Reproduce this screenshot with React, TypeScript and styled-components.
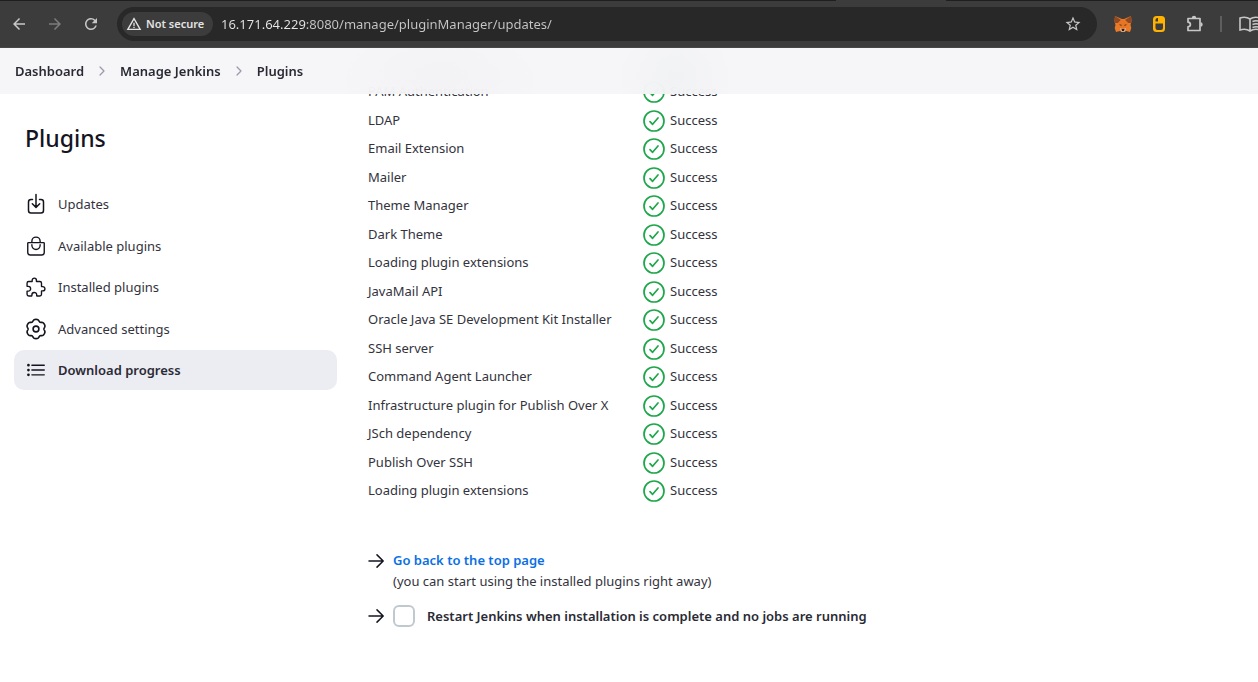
import React from "react";
import styled, { createGlobalStyle } from "styled-components";
import {
  IoBagHandleOutline,
  IoChevronForward,
  IoExtensionPuzzleOutline,
  IoListOutline,
} from "react-icons/io5";
import { MdArrowBack, MdArrowForward, MdRefresh, MdStarBorder, MdWarningAmber } from "react-icons/md";

const GlobalStyle = createGlobalStyle`
  *, *::before, *::after { box-sizing: border-box; }
  body {
    margin: 0;
    background: #fff;
    color: #14141f;
    font: 13px/20px "Noto Sans", "Open Sans", sans-serif;
    overflow: hidden;
  }
  button, input { font: inherit; }
`;

const TabStrip = styled.div`
  display: flex;
  justify-content: flex-end;
  height: 1px;
  padding-right: 312px;
  background: #1f1f1f;
`;

const ActiveTab = styled.div`
  width: 110px;
  background: #3c3c3c;
`;

const Toolbar = styled.div`
  display: flex;
  align-items: center;
  height: 47px;
  margin-right: -10px;
  padding-left: 1px;
  background: #3c3c3c;
  border-bottom: 1px solid #474747;
`;

const ToolButton = styled.button<{ $dim?: boolean }>`
  display: flex;
  flex: none;
  align-items: center;
  justify-content: center;
  width: 36px;
  height: 36px;
  padding: 0;
  border: 0;
  border-radius: 50%;
  background: transparent;
  color: ${(p) => (p.$dim ? "#7c7c7c" : "#c7c7c7")};
`;

const AddressBar = styled.div`
  display: flex;
  flex: 1;
  align-items: center;
  height: 34px;
  margin: 0 8px;
  padding: 0 6px 0 5px;
  border-radius: 17px;
  background: #282828;
`;

const SecurityChip = styled.button`
  display: flex;
  flex: none;
  align-items: center;
  gap: 4px;
  width: 91px;
  height: 24px;
  padding: 0 0 0 4px;
  border: 0;
  border-radius: 12px;
  background: #3c3c3c;
  color: #e3e3e3;
  font-size: 11px;
  font-weight: 600;
  white-space: nowrap;
`;

const AddressInput = styled.input`
  flex: 1;
  min-width: 0;
  margin-left: 8px;
  padding: 0;
  border: 0;
  outline: 0;
  background: linear-gradient(90deg, #e8e8e8 85px, #c7c7c7 85px);
  background-clip: text;
  color: transparent;
`;

const Divider = styled.span`
  flex: none;
  width: 2px;
  height: 16px;
  margin: 0 10px 0 7px;
  background: #5e5e5e;
`;

const Header = styled.header`
  position: relative;
  z-index: 1;
  display: flex;
  align-items: center;
  height: 46px;
  padding-left: 15px;
  background:
    radial-gradient(ellipse 110px 60px at 440px 30px, rgba(20, 20, 31, 0.015), transparent),
    radial-gradient(ellipse 60px 60px at 675px 30px, rgba(20, 60, 50, 0.025), transparent),
    rgba(245, 245, 248, 0.94);
  backdrop-filter: blur(15px);
`;

const Crumbs = styled.ol`
  display: flex;
  align-items: center;
  gap: 11px;
  margin: 0;
  padding: 0;
  list-style: none;
`;

const Crumb = styled.li`
  display: flex;
  align-items: center;
  gap: 11px;
  font-weight: 600;

  a {
    color: #2a2a35;
    text-decoration: none;
  }

  svg {
    color: #9b9bac;
  }
`;

const Page = styled.div`
  display: flex;
  align-items: flex-start;
`;

const Sidebar = styled.aside`
  flex: 0 0 337px;
  padding: 26px 0 0 14px;
`;

const Title = styled.h1`
  margin: 0;
  padding-left: 11px;
  font-size: 23px;
  line-height: 36px;
  font-weight: 500;
`;

const TaskList = styled.nav`
  display: flex;
  flex-direction: column;
  justify-content: space-between;
  height: 206px;
  margin-top: 28px;
`;

const Task = styled.a<{ $active?: boolean }>`
  display: flex;
  align-items: center;
  gap: 11px;
  height: 40px;
  padding-left: 11px;
  border-radius: 10px;
  background: ${(p) => (p.$active ? "#ecedf3" : "transparent")};
  color: ${(p) => (p.$active ? "#2a2a35" : "#33333d")};
  font-weight: ${(p) => (p.$active ? 600 : 400)};
  text-decoration: none;

  svg {
    color: #14141f;
  }
`;

const Main = styled.main`
  flex: 1;
  min-width: 0;
  margin-top: -17px;
  padding-left: 31px;
`;

const JobTable = styled.table`
  border-collapse: collapse;
  color: #33333d;

  td {
    height: 28px;
    padding: 0;
    white-space: nowrap;
  }

  tr:nth-child(even) td {
    height: 29px;
  }

  td:first-child {
    width: 275px;
  }
`;

const Status = styled.span`
  display: flex;
  align-items: center;
  gap: 5px;

  svg {
    margin-top: 2px;
  }
`;

const Actions = styled.div`
  display: flex;
  flex-direction: column;
  gap: 13px;
  margin-top: 46px;
`;

const Action = styled.div`
  display: flex;
  align-items: flex-start;
  gap: 7px;
`;

const ActionText = styled.div`
  color: #33333d;
  line-height: 21px;

  a {
    display: block;
    color: #0b6fe4;
    font-weight: 600;
    text-decoration: none;
  }
`;

const RestartLabel = styled.label`
  display: flex;
  align-items: center;
  gap: 12px;
  height: 22px;
  color: #2a2a35;
  font-weight: 600;
`;

const CheckBox = styled.input`
  appearance: none;
  width: 22px;
  height: 22px;
  margin: 0;
  border: 2px solid #c0c9ce;
  border-radius: 6px;
  background: #fff;
`;

const Fox = () => (
  <svg width="18" height="18" viewBox="0 0 18 18" aria-hidden="true">
    <path d="M1 1l7 3h2l7-3 .5 5-1 4 .8 3-1.3 4-4-1-2 1H8l-2-1-4 1L.7 13l.8-3-1-4z" fill="#e87a28" />
    <path d="M1 1l6 4-3 3-3.500 0zM17 1l-6 4 3 3 3.500 0z" fill="#8f4a24" />
    <path d="M4 8l3-3h4l3 3-2 5H6z" fill="#e87524" />
    <path d="M5 9l3 1-1 1zM13 9l-3 1 1 1z" fill="#5a3520" />
    <path d="M6 13l2 1h2l2-1-1 3.500H7z" fill="#d5c1ae" />
    <path d="M7.500 14h3l-.5 2H8z" fill="#241b16" />
  </svg>
);

const Mouse = () => (
  <svg width="18" height="18" viewBox="0 0 18 18" aria-hidden="true">
    <rect x="3" y="1" width="12" height="16" rx="3.500" fill="#ffb300" />
    <path d="M5.500 6.500V5a2 2 0 0 1 2-2H8v3.500zM5.500 8.500h7.500V13a2 2 0 0 1-2 2H7.500a2 2 0 0 1-2-2z" fill="#3c3c3c" />
  </svg>
);

const Extension = () => (
  <svg width="20" height="20" viewBox="0 0 20 20" aria-hidden="true">
    <path
      d="M3 4.500h12v12H3v-3.700c3.200-.3 3.200-4.300 0-4.600z"
      fill="none"
      stroke="#c7c7c7"
      strokeWidth="1.700"
      strokeLinejoin="round"
    />
    <path d="M6.800 4a2.200 2.200 0 0 1 4.400 0zM15.500 8.300a2.200 2.200 0 0 1 0 4.400z" fill="#c7c7c7" />
  </svg>
);

const Book = () => (
  <svg width="22" height="18" viewBox="0 0 22 18" fill="none" stroke="#c7c7c7" strokeWidth="1.600" aria-hidden="true">
    <path d="M11 4C8 2 4 2 1 3v12c3-1 7-1 10 1 3-2 7-2 10-1V3c-3-1-7-1-10 1zv12M13.500 6.500c2-.8 4-.8 5.500-.5M13.500 9.500c2-.8 4-.8 5.500-.5M13.500 12.500c2-.8 4-.8 5.500-.5" />
  </svg>
);

const strokeProps = {
  fill: "none",
  stroke: "currentColor",
  strokeLinecap: "round",
  strokeLinejoin: "round",
  "aria-hidden": true,
} as const;

const Download = () => (
  <svg width="22" height="22" viewBox="0 0 22 22" strokeWidth="1.500" {...strokeProps}>
    <path d="M7.500 6.500H6A2.500 2.500 0 0 0 3.500 9v8.500A2.500 2.500 0 0 0 6 20h10a2.500 2.500 0 0 0 2.500-2.500V9A2.500 2.500 0 0 0 16 6.500h-1.500M11 1.500V14M7.300 10.800L11 14.400l3.700-3.600" />
  </svg>
);

/* Six-lobed rosette with narrow notches between the lobes. */
const gearOutline =
  Array.from({ length: 97 }, (_, i) => {
    const angle = (i / 96) * Math.PI * 2;
    const radius = 9.6 - 1.7 * Math.pow(Math.abs(Math.cos(angle * 3)), 4);
    const x = 11 + radius * Math.cos(angle);
    const y = 11 + radius * Math.sin(angle);
    return `${i ? "L" : "M"}${x.toFixed(2)} ${y.toFixed(2)}`;
  }).join("") + "z";

const Gear = () => (
  <svg width="22" height="22" viewBox="0 0 22 22" strokeWidth="1.600" {...strokeProps}>
    <path d={gearOutline} />
    <circle cx="11" cy="11" r="2.900" />
  </svg>
);

const Success = () => (
  <svg width="22" height="22" viewBox="0 0 22 22" strokeWidth="1.700" color="#1ea64b" {...strokeProps}>
    <circle cx="11" cy="11" r="10" />
    <path d="M7 11.700l2.600 2.600L15 8" />
  </svg>
);

const Arrow = () => (
  <svg width="18" height="22" viewBox="0 0 18 22" strokeWidth="1.500" {...strokeProps}>
    <path d="M1 11H15M9 4.900L15.200 11l-6.200 6.100" />
  </svg>
);

const tasks = [
  { label: "Updates", icon: <Download /> },
  { label: "Available plugins", icon: <IoBagHandleOutline size={22} /> },
  { label: "Installed plugins", icon: <IoExtensionPuzzleOutline size={22} /> },
  { label: "Advanced settings", icon: <Gear /> },
  { label: "Download progress", icon: <IoListOutline size={22} />, active: true },
];

const jobs = [
  "PAM Authentication",
  "LDAP",
  "Email Extension",
  "Mailer",
  "Theme Manager",
  "Dark Theme",
  "Loading plugin extensions",
  "JavaMail API",
  "Oracle Java SE Development Kit Installer",
  "SSH server",
  "Command Agent Launcher",
  "Infrastructure plugin for Publish Over X",
  "JSch dependency",
  "Publish Over SSH",
  "Loading plugin extensions",
];

export default function App() {
  return (
    <>
      <GlobalStyle />
      <TabStrip>
        <ActiveTab />
      </TabStrip>
      <Toolbar>
        <ToolButton aria-label="Back"><MdArrowBack size={18} /></ToolButton>
        <ToolButton aria-label="Forward" $dim><MdArrowForward size={18} /></ToolButton>
        <ToolButton aria-label="Reload"><MdRefresh size={18} /></ToolButton>
        <AddressBar>
          <SecurityChip><MdWarningAmber size={16} />Not secure</SecurityChip>
          <AddressInput aria-label="Address" defaultValue="16.171.64.229:8080/manage/pluginManager/updates/" />
          <ToolButton aria-label="Bookmark"><MdStarBorder size={18} /></ToolButton>
        </AddressBar>
        <ToolButton aria-label="Wallet"><Fox /></ToolButton>
        <ToolButton aria-label="Mouse tool"><Mouse /></ToolButton>
        <ToolButton aria-label="Extensions"><Extension /></ToolButton>
        <Divider />
        <ToolButton aria-label="Reading list"><Book /></ToolButton>
      </Toolbar>
      <Header>
        <Crumbs>
          <Crumb><a href="#dashboard">Dashboard</a><IoChevronForward size={14} /></Crumb>
          <Crumb><a href="#manage">Manage Jenkins</a><IoChevronForward size={14} /></Crumb>
          <Crumb><a href="#plugins">Plugins</a></Crumb>
        </Crumbs>
      </Header>
      <Page>
        <Sidebar>
          <Title>Plugins</Title>
          <TaskList>
            {tasks.map(({ label, icon, active }) => (
              <Task key={label} href="#task" $active={active}>
                {icon}
                {label}
              </Task>
            ))}
          </TaskList>
        </Sidebar>
        <Main>
          <JobTable>
            <tbody>
              {jobs.map((job, i) => (
                <tr key={i}>
                  <td>{job}</td>
                  <td><Status><Success />Success</Status></td>
                </tr>
              ))}
            </tbody>
          </JobTable>
          <Actions>
            <Action>
              <Arrow />
              <ActionText>
                <a href="#top">Go back to the top page</a>
                (you can start using the installed plugins right away)
              </ActionText>
            </Action>
            <Action>
              <Arrow />
              <RestartLabel>
                <CheckBox type="checkbox" />
                Restart Jenkins when installation is complete and no jobs are running
              </RestartLabel>
            </Action>
          </Actions>
        </Main>
      </Page>
    </>
  );
}
